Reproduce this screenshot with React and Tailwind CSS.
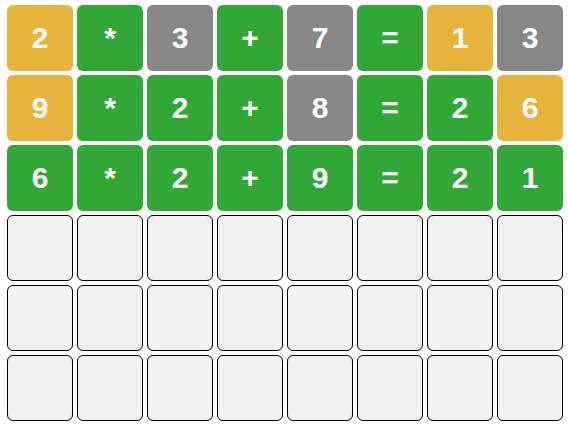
const rows = [
  [['2', 'y'], ['*', 'g'], ['3', 'x'], ['+', 'g'], ['7', 'x'], ['=', 'g'], ['1', 'y'], ['3', 'x']],
  [['9', 'y'], ['*', 'g'], ['2', 'g'], ['+', 'g'], ['8', 'x'], ['=', 'g'], ['2', 'g'], ['6', 'y']],
  [['6', 'g'], ['*', 'g'], ['2', 'g'], ['+', 'g'], ['9', 'g'], ['=', 'g'], ['2', 'g'], ['1', 'g']],
];

const colors = {
  y: 'bg-[#e6b43a]',
  g: 'bg-[#31a737]',
  x: 'bg-[#878787]',
};

const Tile = ({ value, status }) => {
  if (!status) {
    return <div className="w-[66px] h-[66px] rounded-md border border-black bg-[#f1f1f1]" />;
  }
  return (
    <div
      className={`w-[66px] h-[66px] rounded-md flex items-center justify-center text-white font-bold text-[30px] leading-none ${colors[status]}`}
    >
      {value}
    </div>
  );
};

export default function App() {
  const empty = Array.from({ length: 3 }, () => Array.from({ length: 8 }, () => ['', null]));
  const all = [...rows, ...empty];

  return (
    <div className="min-h-screen bg-white flex justify-center pt-[5px] pl-[2px]" style={{ fontFamily: '"Liberation Sans", Arial, sans-serif' }}>
      <div className="grid grid-cols-[repeat(8,66px)] auto-rows-[66px] gap-1">
        {all.map((row, r) =>
          row.map(([v, s], c) => <Tile key={`${r}-${c}`} value={v} status={s} />)
        )}
      </div>
    </div>
  );
}
